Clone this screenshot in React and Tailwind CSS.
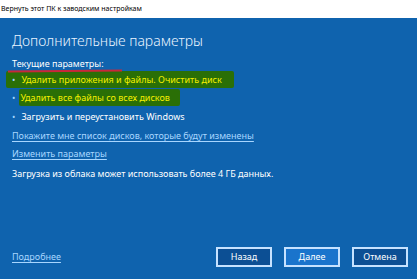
export default function App() {
  const font = { fontFamily: '"Noto Sans", "Liberation Sans", sans-serif' };
  return (
    <div className="w-[417px] h-[279px] flex flex-col bg-[#0f63ae] text-white" style={font}>
      {/* Title bar */}
      <div className="h-[18px] bg-white text-black text-[7px] leading-[18px] pl-[1px] shrink-0">
        Вернуть этот ПК к заводским настройкам
      </div>

      <div className="flex-1 flex flex-col px-[12px]">
        <h1 className="mt-[13px] text-[14px] leading-[20px] font-light text-[#eaf4ff]">Дополнительные параметры</h1>

        <div className="mt-[7px] text-[9px] leading-[12px]">Текущие параметры:</div>
        <div className="h-[2px] w-[114px] -ml-[4px] bg-[#c8283a] -rotate-[0.4deg]" />

        {/* Highlighted list */}
        <div className="-mt-[1px] -ml-[6px] w-[228px] h-[17px] bg-[#2a6f06] rounded-[2px] flex items-center pl-[6px] text-[9px] text-[#f4f000]">
          <span className="text-[#9fd4ff] mr-[6px]">•</span>
          Удалить приложения и файлы. Очистить диск
        </div>
        <div className="mt-[1px] flex items-start text-[9px] leading-[17px]">
          <span className="text-[#9fd4ff] mr-[5px]">•</span>
          <div className="bg-[#2a6f06] h-[17px] pr-[10px] pl-[1px] -ml-[1px] rounded-[2px] text-[#f4f000]">
            Удалить все файлы со всех дисков
          </div>
        </div>
        <div className="mt-[4px] flex items-center text-[9px] leading-[14px]">
          <span className="text-[#9fd4ff] mr-[6px]">•</span>
          Загрузить и переустановить Windows
        </div>

        <a className="mt-[5px] text-[9px] leading-[14px] text-[#a8d6ff] underline underline-offset-2">
          Покажите мне список дисков, которые будут изменены
        </a>
        <a className="mt-[4px] text-[9px] leading-[14px] text-[#a8d6ff] underline underline-offset-2 self-start">
          Изменить параметры
        </a>
        <div className="mt-[6px] text-[9px] leading-[14px]">
          Загрузка из облака может использовать более 4 ГБ данных.
        </div>

        <div className="mt-auto mb-[12px] flex items-center justify-between">
          <a className="text-[9px] text-[#a8d6ff] underline underline-offset-2">Подробнее</a>
          <div className="flex gap-[12px] -mr-[3px]">
            <button className="w-[56px] h-[20px] border-2 border-[#c6e2ff] bg-[#0c4f94] text-[9px] text-white">Назад</button>
            <button className="w-[56px] h-[20px] border-2 border-[#c6e2ff] bg-[#1a74cc] text-[9px] text-white">Далее</button>
            <button className="w-[56px] h-[20px] border-2 border-[#c6e2ff] bg-[#0c4f94] text-[9px] text-white">Отмена</button>
          </div>
        </div>
      </div>
    </div>
  );
}
